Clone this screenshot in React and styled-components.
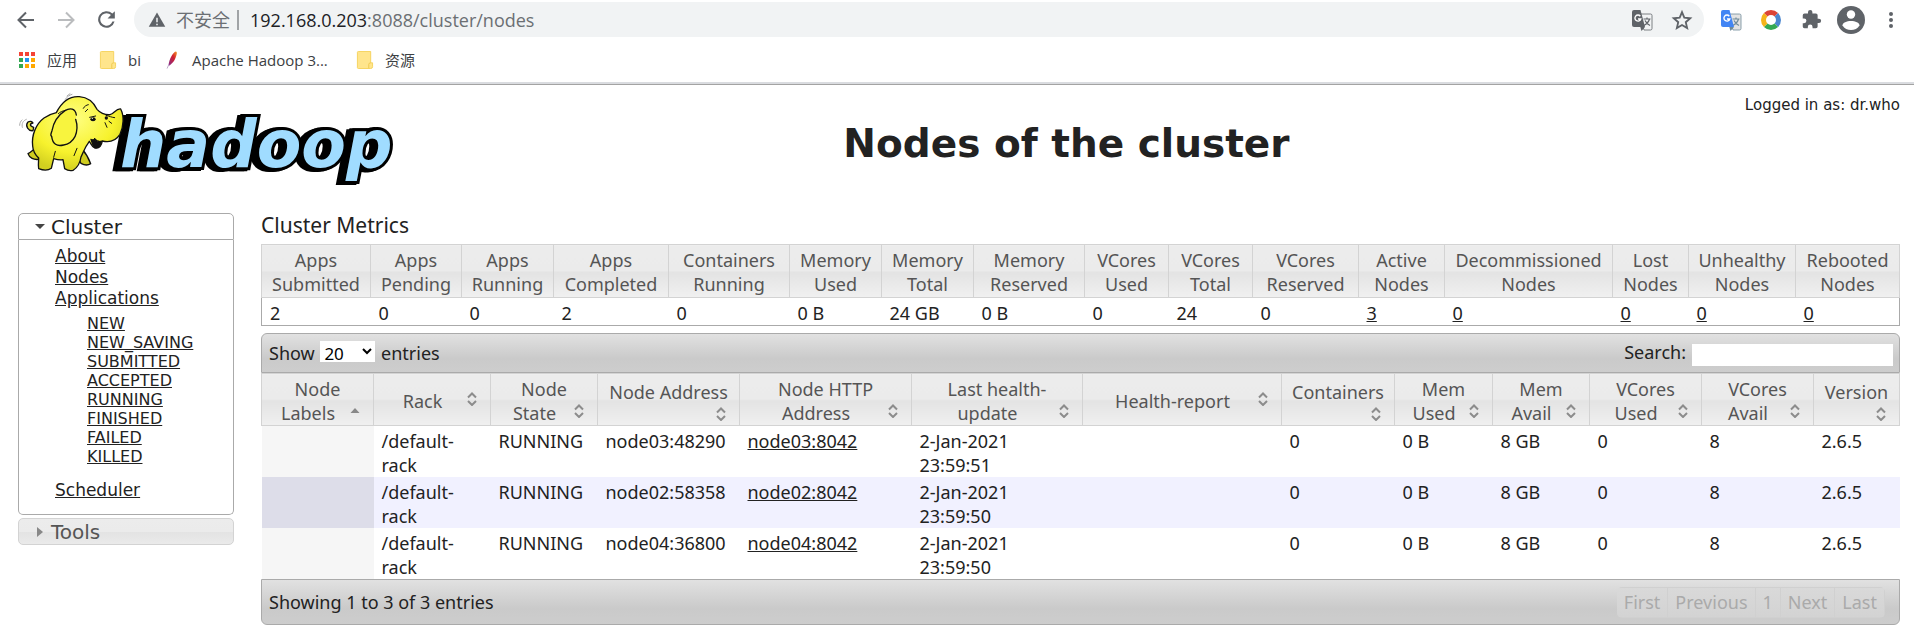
import React from "react";
import styled, { createGlobalStyle } from "styled-components";

const GlobalStyle = createGlobalStyle`
  body {
    margin: 0;
    background: #fff;
    color: #222;
    font-family: "Noto Sans", "Noto Sans CJK SC", sans-serif;
    font-size: 18px;
    line-height: 24px;
  }
  a {
    color: #222;
  }
`;

const Browser = styled.header`
  border-bottom: 1px solid #a3a3a3;
  font-family: "Open Sans", "Noto Sans CJK SC", sans-serif;
`;

const AddressRow = styled.div`
  display: flex;
  align-items: center;
  padding: 2px 3px 2px 6px;
`;

const IconButton = styled.button`
  display: flex;
  align-items: center;
  justify-content: center;
  flex: 0 0 40px;
  height: 32px;
  padding: 0;
  border: 0;
  background: none;
  color: #5f6368;
`;

const Omnibox = styled.div`
  display: flex;
  flex: 1;
  align-items: center;
  height: 35px;
  margin: 0 7px 0 8px;
  padding: 0 2px 0 14px;
  border-radius: 18px;
  background: #f1f3f4;
  color: #6b6f73;
`;

const Insecure = styled.span`
  margin-left: 10px;
  padding-right: 7px;
`;

const Divider = styled.span`
  width: 2px;
  height: 20px;
  background: #a0a3a6;
`;

const Url = styled.span`
  flex: 1;
  margin-left: 11px;
  b {
    color: #202124;
    font-weight: normal;
  }
`;

const BookmarkBar = styled.nav`
  display: flex;
  align-items: center;
  gap: 22px;
  height: 41px;
  padding: 0 0 2px 18px;
  border-bottom: 2px solid #dadce0;
`;

const Bookmark = styled.a`
  display: flex;
  align-items: center;
  gap: 11px;
  color: #3c4043;
  font-size: 15px;
  text-decoration: none;
`;

const BookmarkLabel = styled.span`
  width: ${(props) => (props.$truncated ? "142px" : "auto")};
`;

const PageHeader = styled.header`
  display: flex;
  align-items: flex-start;
  height: 128px;
  padding: 0 14px 0 15px;
  font-family: "DejaVu Sans", sans-serif;
`;

const Title = styled.h1`
  flex: 1;
  margin: 36px 12px 0 0;
  font-size: 39px;
  line-height: 46px;
  text-align: center;
`;

const Login = styled.div`
  margin-top: 8px;
  font-size: 15px;
`;

const Main = styled.main`
  display: flex;
  align-items: flex-start;
  gap: 27px;
  padding: 0 14px 8px 18px;
`;

const Sidebar = styled.nav`
  flex: 0 0 216px;
  box-sizing: border-box;
  font-family: "DejaVu Sans", sans-serif;
`;

const SectionTitle = styled.h3`
  display: flex;
  align-items: center;
  gap: 6px;
  height: 25px;
  margin: 0;
  padding-left: 16px;
  border: 1px solid ${(props) => (props.$open ? "#aaa" : "#d3d3d3")};
  border-radius: ${(props) => (props.$open ? "5px 5px 0 0" : "5px")};
  background: ${(props) =>
    props.$open
      ? "#fff"
      : "linear-gradient(#ececec 0%, #ebebeb 50%, #e3e3e3 51%, #eaeaea 100%)"};
  color: ${(props) => (props.$open ? "#222" : "#555")};
  font-size: 20px;
  font-weight: normal;
`;

const Arrow = styled.span`
  width: 0;
  height: 0;
  margin: ${(props) => (props.$open ? "0" : "0 2px")};
  border: solid transparent;
  border-width: ${(props) => (props.$open ? "5px 5px 0" : "5px 0 5px 6px")};
  border-top-color: ${(props) => (props.$open ? "#454545" : "transparent")};
  border-left-color: ${(props) => (props.$open ? "transparent" : "#888")};
`;

const SectionBody = styled.div`
  margin-bottom: 3px;
  padding: 6px 0 13px 36px;
  border: 1px solid #aaa;
  border-top: 0;
  border-radius: 0 0 5px 5px;
`;

const LinkList = styled.ul`
  margin: 0;
  padding: 0;
  list-style: none;
  font-size: 17px;
  line-height: 21px;
`;

const StateList = styled.ul`
  margin: 5px 0 14px;
  padding-left: 32px;
  list-style: none;
  font-size: 16px;
  line-height: 19px;
`;

const Content = styled.section`
  flex: 1;
  min-width: 0;
`;

const Heading = styled.h3`
  margin: 0;
  padding-bottom: 7px;
  font-size: 21px;
  font-weight: normal;
`;

const Table = styled.table`
  width: 100%;
  border-collapse: collapse;
  table-layout: fixed;
`;

const MetricsTable = styled(Table)`
  margin-bottom: 7px;
  border: 1px solid #aaa;
`;

const Col = styled.col`
  width: ${(props) => props.$width}px;
`;

const Th = styled.th`
  padding: ${(props) => (props.$sortable ? "3px 10px 0" : "3px 4px 1px")};
  border: 1px solid #d3d3d3;
  background: linear-gradient(#ececec 0%, #ebebeb 49%, #e3e3e3 51%, #f0f0f0 100%);
  color: #555;
  font-weight: normal;
  vertical-align: middle;
`;

const SortIcon = styled.span`
  display: flex;
  float: right;
  align-items: center;
  justify-content: center;
  width: 16px;
  height: 16px;
  margin: 2px 0 0 3px;
`;

const Td = styled.td`
  padding: 3px 8px 0;
  overflow-wrap: break-word;
  vertical-align: top;
`;

const NodeRow = styled.tr`
  background: ${(props) => (props.$even ? "#f1f1ff" : "#fff")};
  td:first-child {
    background: ${(props) => (props.$even ? "#dddde9" : "#f6f6f6")};
  }
`;

const TableBar = styled.div`
  display: flex;
  align-items: center;
  justify-content: space-between;
  box-sizing: border-box;
  height: ${(props) => (props.$footer ? "46px" : "40px")};
  padding: 0 ${(props) => (props.$footer ? "14px" : "6px")} 0 7px;
  border: 1px solid #aaa;
  border-radius: ${(props) => (props.$footer ? "0 0 6px 6px" : "6px 6px 0 0")};
  background: linear-gradient(#e1e1e1 0%, #cacaca 65%, #cdcdcd 100%);
`;

const Length = styled.select`
  width: 55px;
  height: 21px;
  margin: 0 1px;
  padding: 0;
  border: 0;
  border-radius: 0;
  background-color: #fff;
  color: #000;
  font: 17px "Noto Sans", sans-serif;
`;

const SearchInput = styled.input`
  box-sizing: border-box;
  width: 201px;
  height: 22px;
  margin-left: 6px;
  padding: 0 2px;
  border: 0;
  background: #fff;
  font: inherit;
  vertical-align: middle;
`;

const Pager = styled.div`
  display: flex;
  overflow: hidden;
  border-radius: 5px;
`;

const PageButton = styled.button`
  height: 31px;
  padding: 0 7px;
  border: 1px solid #d0d0d0;
  border-left-width: 0;
  background: linear-gradient(#d9d9d9, #d3d3d3);
  color: #aaa;
  font: inherit;
`;

const Svg = ({ size = 18, box = "0 0 24 24", children }) => (
  <svg width={size} height={size} viewBox={box} fill="none" aria-hidden="true">
    {children}
  </svg>
);

const Back = () => (
  <Svg size={24}>
    <path d="M20 12H5M12 4.5 4.5 12l7.500 7.500" stroke="#5f6368" strokeWidth="2" />
  </Svg>
);

const Forward = () => (
  <Svg size={24}>
    <path d="M4 12h15M12 4.500 19.500 12 12 19.500" stroke="#babcbe" strokeWidth="2" />
  </Svg>
);

const Reload = () => (
  <Svg size={25}>
    <path
      fill="#5f6368"
      d="M17.650 6.350A8 8 0 1 0 19.730 14h-2.080A6 6 0 1 1 12 6c1.660 0 3.140.690 4.220 1.780L13 11h7V4z"
    />
  </Svg>
);

const Warning = () => (
  <Svg size={18}>
    <path fill="#5f6368" d="M1 21h22L12 2z" />
    <path fill="#f1f3f4" d="M11 9h2v6h-2zM11 17h2v2h-2z" />
  </Svg>
);

const Translate = ({ front, back, mark }) => (
  <Svg size={22} box="0 0 22 22">
    <path d="M8 5h11.500a1.500 1.500 0 0 1 1.500 1.500v13a1.500 1.500 0 0 1-1.500 1.500H13z" fill={back} stroke={mark} strokeWidth=".8" />
    <path d="M12.500 10h7M16 8.500V10M18.500 10c-.8 3-3 5-5.500 6.500M14 11.500c1.200 2.500 3 4 5 5" stroke={mark} strokeWidth="1.200" />
    <path d="M3 1h6.500l4.500 17H3a2 2 0 0 1-2-2V3a2 2 0 0 1 2-2z" fill={front} />
    <path d="M9.300 18H14l-3.500 4z" fill={mark} />
    <path d="M9.300 7.200A3 3 0 1 0 9.800 10H7" stroke="#fff" strokeWidth="1.400" />
  </Svg>
);

const Star = () => (
  <Svg size={22}>
    <path
      d="m12 3.500 2.500 6 6.500.6-4.900 4.300 1.500 6.400-5.600-3.400-5.600 3.400 1.500-6.400L3 10.100l6.500-.6z"
      stroke="#5f6368"
      strokeWidth="2"
    />
  </Svg>
);

const Ring = () => (
  <Svg size={20} box="0 0 20 20">
    <g strokeWidth="5">
      <path d="M4.700 4.700a7.500 7.500 0 0 1 10.600 0" stroke="#db4437" />
      <path d="M15.300 4.700a7.500 7.500 0 0 1 0 10.600" stroke="#4a86cf" />
      <path d="M15.300 15.300a7.500 7.500 0 0 1-10.600 0" stroke="#34a853" />
      <path d="M4.700 15.300a7.500 7.500 0 0 1 0-10.600" stroke="#f4b41a" />
    </g>
  </Svg>
);

const Puzzle = () => (
  <Svg size={21}>
    <path
      fill="#5f6368"
      d="M20.500 11H19V7a2 2 0 0 0-2-2h-4V3.500a2.500 2.500 0 0 0-5 0V5H4a2 2 0 0 0-2 2v3.800h1.500a2.700 2.700 0 0 1 0 5.400H2V20a2 2 0 0 0 2 2h3.800v-1.500a2.700 2.700 0 0 1 5.400 0V22H17a2 2 0 0 0 2-2v-4h1.500a2.500 2.500 0 0 0 0-5z"
    />
  </Svg>
);

const Avatar = () => (
  <Svg size={28} box="0 0 28 28">
    <circle cx="14" cy="14" r="14" fill="#5f6368" />
    <circle cx="14" cy="8.500" r="4.200" fill="#fff" />
    <path d="M5.500 19.500c0-6 17-6 17 0-3.500 6-13.500 6-17 0z" fill="#fff" />
  </Svg>
);

const Dots = () => (
  <Svg size={18} box="0 0 18 18">
    <circle cx="9" cy="3" r="2" fill="#5f6368" />
    <circle cx="9" cy="9" r="2" fill="#5f6368" />
    <circle cx="9" cy="15" r="2" fill="#5f6368" />
  </Svg>
);

const appColors = ["#f44336", "#f44336", "#f44336", "#34a853", "#2196f3", "#ffa800", "#34a853", "#ffa800", "#ffa800"];

const Apps = () => (
  <Svg size={18} box="0 0 18 18">
    {appColors.map((color, i) => (
      <rect key={i} x={(i % 3) * 6 + 1} y={Math.floor(i / 3) * 6 + 1} width="4" height="4" fill={color} />
    ))}
  </Svg>
);

const Folder = () => (
  <Svg size={18} box="0 0 17 19">
    <path d="M1.500.5h13v12h2v4q0 2-2 2h-13q-1 0-1-1v-16q0-1 1-1z" fill="#ffe58c" stroke="#f6d35c" />
    <path d="M12.500 18v-4q0-1.500 2-1.500" stroke="#eec84c" />
  </Svg>
);

const Feather = () => (
  <Svg size={18} box="0 0 18 20">
    <defs>
      <linearGradient id="feather" x1="1" y1="0" x2="0" y2="1">
        <stop offset="0" stopColor="#f69923" />
        <stop offset=".4" stopColor="#d2202f" />
        <stop offset="1" stopColor="#7e2b8f" />
      </linearGradient>
    </defs>
    <path d="M13.500.5c1.500.5 1 3-.5 7S8 15.500 5 16.500c.5-4 1.500-7.500 3.500-11S12 .8 13.500.5z" fill="url(#feather)" />
    <path d="m5.500 15-2 4.500" stroke="#b9a1c5" />
  </Svg>
);

const Sort = () => (
  <Svg size={14} box="0 0 14 14">
    <path d="m3 5.500 4-4 4 4M3 9l4 4 4-4" stroke="#8c8c8c" strokeWidth="2" />
  </Svg>
);

const SortAsc = () => (
  <Svg size={14} box="0 0 14 14">
    <path d="M2.500 9 7 4l4.500 5z" fill="#888" />
  </Svg>
);

const Wordmark = styled.text`
  fill: #a0dcff;
  stroke: #000;
  stroke-width: 6px;
  paint-order: stroke;
  filter: drop-shadow(-3px 0 0 #000) drop-shadow(-3px 1px 0 #000);
  font: oblique bold 65px "DejaVu Sans", sans-serif;
`;

const Logo = () => (
  <svg width="385" height="100" viewBox="15 85 385 100" role="img" aria-label="hadoop">
    <defs>
      <radialGradient id="skin" cx=".45" cy=".3" r=".7">
        <stop offset="0" stopColor="#ffff85" />
        <stop offset=".65" stopColor="#f7f22d" />
        <stop offset="1" stopColor="#d2cf20" />
      </radialGradient>
    </defs>
    <Wordmark x="120" y="167">hadoop</Wordmark>
    <g transform="translate(15 90) scale(.3333)" stroke="#111" strokeWidth="4" strokeLinejoin="round" strokeLinecap="round">
      <path d="M54 122c-14 2-24-14-16-25 7-5 14-3 16 2-9 1-12 9 2 13z" fill="#e6e23a" />
      <path d="M68 172c-10 2-18 14-29 19 4 13 18 19 32 17zM201 177c9 10 20 27 26 44-9 6-20 4-29-1l-7-12z" fill="#cfcc20" />
      <path
        d="M124 68c14-28 38-50 69-48 28 2 44 19 53 38 12 13 25 17 39 16 13-3 18-19 32-17 11 21 9 52-2 76-13 20-32 25-53 20-2 12-8 24-22 21-10-3-12-14-17-20-13 17-15 25-25 47-2 14-9 31-24 40-10 3-19-1-25-5l-5-27c-10 2-18 0-28-3l-7 29c-11 8-26 6-38 1-2-12 0-23 0-32-11-10-17-20-18-36-4-34 11-67 34-84 10-7 23-13 37-16z"
        fill="url(#skin)"
      />
      <path
        d="M184 75c-3-19-18-23-34-13-24 16-35 38-39 60-2 8-7 14-1 17 3 24 16 31 36 26 17-2 27-12 34-25 8-18 8-34 2-52"
        fill="#f8f43e"
      />
      <path d="M228 148c5 13 6 24 15 25 10 1 14-9 16-19-9 2-15 0-19-7" fill="#111" />
      <path d="M238 145c6 8 13 10 22 9M273 76c11 3 17 6 26 7M270 98l6 14M282 94l8 6M224 82l18-4M211 65l7-7M205 55c3-6 9-10 15-11M151 61c-9 2-16 5-21 10M116 202l5-18M177 197l9-22" fill="none" strokeWidth="3" />
      <ellipse cx="234" cy="88" rx="8" ry="6" fill="#111" stroke="none" />
      <circle cx="232" cy="85" r="2" fill="#fff" stroke="none" />
      <ellipse cx="274" cy="84" rx="5" ry="5" fill="#111" stroke="none" />
      <path d="M22 112c-3-11 2-20 12-24M14 106c0-7 3-13 7-16M151 28c5-8 11-12 20-15M156 18l9-7" stroke="#aaa" strokeWidth="3" fill="none" />
    </g>
  </svg>
);

const metrics = [
  { width: 109, head: ["Apps", "Submitted"], value: "2" },
  { width: 91, head: ["Apps", "Pending"], value: "0" },
  { width: 92, head: ["Apps", "Running"], value: "0" },
  { width: 115, head: ["Apps", "Completed"], value: "2" },
  { width: 121, head: ["Containers", "Running"], value: "0" },
  { width: 92, head: ["Memory", "Used"], value: "0 B" },
  { width: 92, head: ["Memory", "Total"], value: "24 GB" },
  { width: 111, head: ["Memory", "Reserved"], value: "0 B" },
  { width: 84, head: ["VCores", "Used"], value: "0" },
  { width: 84, head: ["VCores", "Total"], value: "24" },
  { width: 106, head: ["VCores", "Reserved"], value: "0" },
  { width: 86, head: ["Active", "Nodes"], value: "3", link: true },
  { width: 168, head: ["Decommissioned", "Nodes"], value: "0", link: true },
  { width: 76, head: ["Lost", "Nodes"], value: "0", link: true },
  { width: 107, head: ["Unhealthy", "Nodes"], value: "0", link: true },
  { width: 104, head: ["Rebooted", "Nodes"], value: "0", link: true },
];

const columns = [
  { width: 112, head: ["Node", "Labels"], sorted: true },
  { width: 117, head: ["Rack"] },
  { width: 107, head: ["Node", "State"] },
  { width: 142, head: ["Node Address"] },
  { width: 172, head: ["Node HTTP", "Address"] },
  { width: 171, head: ["Last health-", "update"] },
  { width: 199, head: ["Health-report"] },
  { width: 113, head: ["Containers"] },
  { width: 98, head: ["Mem", "Used"] },
  { width: 97, head: ["Mem", "Avail"] },
  { width: 112, head: ["VCores", "Used"] },
  { width: 112, head: ["VCores", "Avail"] },
  { width: 86, head: ["Version"] },
];

const nodes = [
  { address: "node03:48290", http: "node03:8042", update: "2-Jan-2021 23:59:51" },
  { address: "node02:58358", http: "node02:8042", update: "2-Jan-2021 23:59:50" },
  { address: "node04:36800", http: "node04:8042", update: "2-Jan-2021 23:59:50" },
];

const states = ["NEW", "NEW_SAVING", "SUBMITTED", "ACCEPTED", "RUNNING", "FINISHED", "FAILED", "KILLED"];

const HeadText = ({ lines }) =>
  lines.map((line, i) => (
    <React.Fragment key={line}>
      {i > 0 && <br />}
      {line}
    </React.Fragment>
  ));

const BrowserBar = () => (
  <Browser>
    <AddressRow>
      <IconButton aria-label="Back"><Back /></IconButton>
      <IconButton aria-label="Forward"><Forward /></IconButton>
      <IconButton aria-label="Reload"><Reload /></IconButton>
      <Omnibox>
        <Warning />
        <Insecure>不安全</Insecure>
        <Divider />
        <Url><b>192.168.0.203</b>:8088/cluster/nodes</Url>
        <IconButton aria-label="Translate">
          <Translate front="#5f6368" back="#f1f3f4" mark="#5f6368" />
        </IconButton>
        <IconButton aria-label="Bookmark"><Star /></IconButton>
      </Omnibox>
      <IconButton aria-label="Google Translate">
        <Translate front="#4285f4" back="#e3e3e3" mark="#6f8a99" />
      </IconButton>
      <IconButton aria-label="Ring"><Ring /></IconButton>
      <IconButton aria-label="Extensions"><Puzzle /></IconButton>
      <IconButton aria-label="Profile"><Avatar /></IconButton>
      <IconButton aria-label="Menu"><Dots /></IconButton>
    </AddressRow>
    <BookmarkBar>
      <Bookmark href="#"><Apps /><BookmarkLabel>应用</BookmarkLabel></Bookmark>
      <Bookmark href="#"><Folder /><BookmarkLabel>bi</BookmarkLabel></Bookmark>
      <Bookmark href="#"><Feather /><BookmarkLabel $truncated>Apache Hadoop 3...</BookmarkLabel></Bookmark>
      <Bookmark href="#"><Folder /><BookmarkLabel>资源</BookmarkLabel></Bookmark>
    </BookmarkBar>
  </Browser>
);

const ClusterMenu = () => (
  <Sidebar>
    <SectionTitle $open><Arrow $open />Cluster</SectionTitle>
    <SectionBody>
      <LinkList>
        <li><a href="#">About</a></li>
        <li><a href="#">Nodes</a></li>
        <li>
          <a href="#">Applications</a>
          <StateList>
            {states.map((state) => (
              <li key={state}><a href="#">{state}</a></li>
            ))}
          </StateList>
        </li>
        <li><a href="#">Scheduler</a></li>
      </LinkList>
    </SectionBody>
    <SectionTitle><Arrow />Tools</SectionTitle>
  </Sidebar>
);

const Metrics = () => (
  <MetricsTable>
    <colgroup>
      {metrics.map((m, i) => <Col key={i} $width={m.width} />)}
    </colgroup>
    <thead>
      <tr>
        {metrics.map((m, i) => (
          <Th key={i}><HeadText lines={m.head} /></Th>
        ))}
      </tr>
    </thead>
    <tbody>
      <tr>
        {metrics.map((m, i) => (
          <Td key={i}>{m.link ? <a href="#">{m.value}</a> : m.value}</Td>
        ))}
      </tr>
    </tbody>
  </MetricsTable>
);

const NodesTable = () => (
  <div>
    <TableBar>
      <label>
        Show{" "}
        <Length defaultValue="20">
          <option>20</option>
          <option>40</option>
          <option>60</option>
        </Length>{" "}
        entries
      </label>
      <label>
        Search:
        <SearchInput type="text" />
      </label>
    </TableBar>
    <Table>
      <colgroup>
        {columns.map((c, i) => <Col key={i} $width={c.width} />)}
      </colgroup>
      <thead>
        <tr>
          {columns.map((c, i) => (
            <Th key={i} $sortable>
              <HeadText lines={c.head} />
              <SortIcon>{c.sorted ? <SortAsc /> : <Sort />}</SortIcon>
            </Th>
          ))}
        </tr>
      </thead>
      <tbody>
        {nodes.map((node, i) => (
          <NodeRow key={node.address} $even={i % 2 === 1}>
            <Td />
            <Td>/default-rack</Td>
            <Td>RUNNING</Td>
            <Td>{node.address}</Td>
            <Td><a href="#">{node.http}</a></Td>
            <Td>{node.update}</Td>
            <Td />
            <Td>0</Td>
            <Td>0 B</Td>
            <Td>8 GB</Td>
            <Td>0</Td>
            <Td>8</Td>
            <Td>2.6.5</Td>
          </NodeRow>
        ))}
      </tbody>
    </Table>
    <TableBar $footer>
      <span>Showing 1 to 3 of 3 entries</span>
      <Pager>
        {["First", "Previous", "1", "Next", "Last"].map((label) => (
          <PageButton key={label}>{label}</PageButton>
        ))}
      </Pager>
    </TableBar>
  </div>
);

const App = () => {
  return (
    <>
      <GlobalStyle />
      <BrowserBar />
      <PageHeader>
        <Logo />
        <Title>Nodes of the cluster</Title>
        <Login>Logged in as: dr.who</Login>
      </PageHeader>
      <Main>
        <ClusterMenu />
        <Content>
          <Heading>Cluster Metrics</Heading>
          <Metrics />
          <NodesTable />
        </Content>
      </Main>
    </>
  );
};

export default App;
